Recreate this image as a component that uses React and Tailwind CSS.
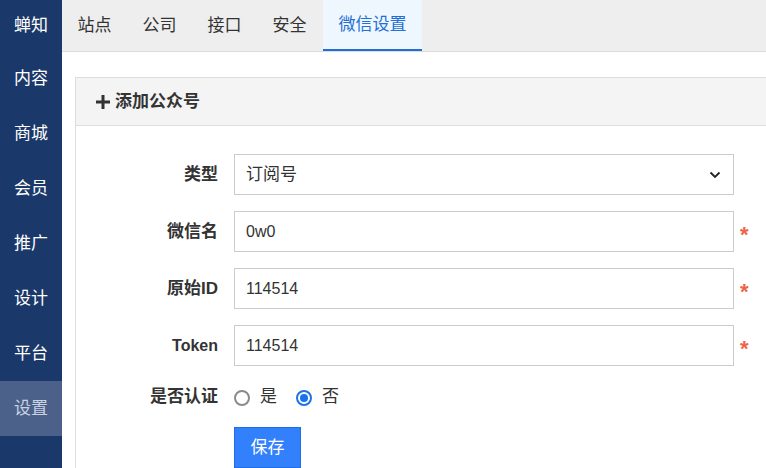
import React from "react";

const font = { fontFamily: '"Liberation Sans", "Noto Sans CJK SC", sans-serif' };

const navItems = ["内容", "商城", "会员", "推广", "设计", "平台", "设置"];
const tabs = ["站点", "公司", "接口", "安全", "微信设置"];

function Star() {
  return <span className="ml-[6px] text-[#ef6448] text-[22px] leading-none mt-[13px] font-bold">*</span>;
}

export default function App() {
  return (
    <div className="flex w-[766px] h-[468px] overflow-hidden bg-white text-[#333]" style={font}>
      <aside className="w-[62px] shrink-0 bg-[#1b386a] flex flex-col text-white text-[17px]">
        <div className="h-[51px] flex items-center justify-center">蝉知</div>
        {navItems.map((n) => (
          <div
            key={n}
            className={
              "h-[55px] flex items-center justify-center " +
              (n === "设置" ? "bg-[#4b6189] text-[#c9d2e2]" : "")
            }
          >
            {n}
          </div>
        ))}
      </aside>
      <main className="flex-1 flex flex-col min-w-0">
        <div className="h-[52px] shrink-0 bg-[#eeeeee] border-b border-[#dcdcdc] flex text-[17px]">
          {tabs.map((t) => (
            <div
              key={t}
              className={
                "h-[51px] px-[15.5px] flex items-center " +
                (t === "微信设置"
                  ? "bg-[#eef6fe] text-[#1f6fd6] border-b-2 border-[#1f6fd6] ml-[1px]"
                  : "text-[#333]")
              }
            >
              {t}
            </div>
          ))}
        </div>
        <div className="pl-[13px] pt-[25px]">
          <div className="border border-[#dddddd] border-r-0">
            <div className="h-[48px] bg-[#f4f4f4] border-b border-[#dddddd] flex items-center pl-[20px] text-[17px] font-bold text-[#333]">
              <svg width="14" height="14" viewBox="0 0 14 14" className="mr-[5px]">
                <path d="M5.5 0h3v5.5H14v3H8.5V14h-3V8.5H0v-3h5.5z" fill="#333" />
              </svg>
              添加公众号
            </div>
            <div className="pt-[28px] pb-[10px] flex flex-col gap-[16px] text-[16px]">
              <div className="flex items-start">
                <label className="w-[142px] h-[41px] flex items-center justify-end font-bold text-[17px]">类型</label>
                <div className="ml-[16px] w-[500px] h-[41px] border border-[#cccccc] flex items-center justify-between pl-[11px] pr-[12px]">
                  <span className="text-[17px]">订阅号</span>
                  <svg width="12" height="8" viewBox="0 0 12 8">
                    <path d="M1.5 1.5l4.5 4.5 4.5-4.5" stroke="#222" strokeWidth="1.8" fill="none" />
                  </svg>
                </div>
              </div>
              {[
                ["微信名", "0w0", true],
                ["原始ID", "114514", true],
                ["Token", "114514", false],
              ].map(([l, v, cjk]) => (
                <div key={l} className="flex items-start">
                  <label
                    className={
                      "w-[142px] h-[41px] flex items-center justify-end font-bold " +
                      (cjk ? "text-[17px]" : "text-[16px]")
                    }
                  >
                    {l}
                  </label>
                  <div className="ml-[16px] w-[500px] h-[41px] border border-[#cccccc] flex items-center pl-[11px]">
                    {v}
                  </div>
                  <Star />
                </div>
              ))}
              <div className="flex items-center h-[30px]">
                <label className="w-[142px] flex items-center justify-end font-bold text-[17px]">是否认证</label>
                <div className="ml-[16px] flex items-center text-[17px]">
                  <span className="w-[16px] h-[16px] rounded-full border-2 border-[#8a8a8f] box-border mt-[1px]" />
                  <span className="ml-[10px]">是</span>
                  <span className="ml-[19px] w-[16px] h-[16px] rounded-full border-2 border-[#1a73e8] flex items-center justify-center mt-[1px]">
                    <span className="w-[8px] h-[8px] rounded-full bg-[#1a73e8]" />
                  </span>
                  <span className="ml-[10px]">否</span>
                </div>
              </div>
              <div className="flex -mt-[1px]">
                <div className="w-[142px]" />
                <button className="ml-[16px] w-[67px] h-[41px] bg-[#3280fc] border border-[#1f6ee8] text-white text-[17px]">
                  保存
                </button>
              </div>
            </div>
          </div>
        </div>
      </main>
    </div>
  );
}
